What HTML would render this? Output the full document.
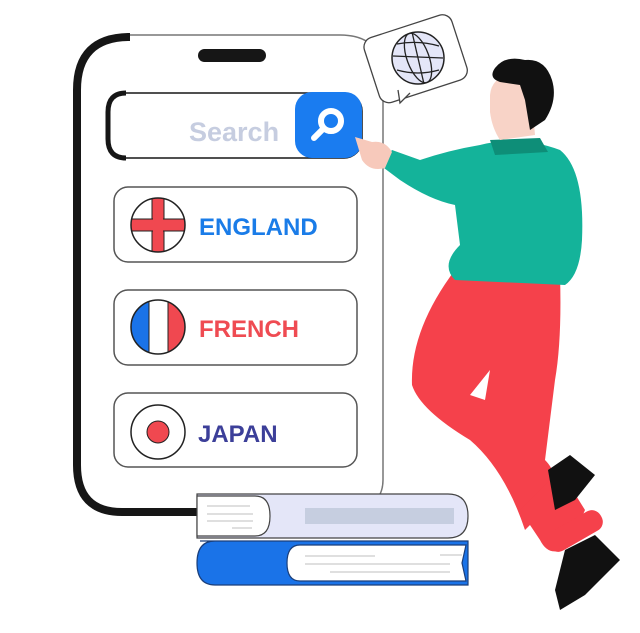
<!DOCTYPE html>
<html><head><meta charset="utf-8"><style>
html,body{margin:0;padding:0;background:#fff;}
svg{display:block;}
text{font-family:"Liberation Sans",sans-serif;font-weight:bold;}
</style></head><body>
<svg width="640" height="633" viewBox="0 0 640 633" xmlns="http://www.w3.org/2000/svg">
<!-- phone -->
<path d="M200 512 L122 512 Q75 512 75 465 L75 90 Q75 35 130 35 L340 35 Q383 35 383 78 L383 480 Q383 495 372 505" fill="#fff" stroke="#777" stroke-width="1.5"/>
<path d="M200 512 L122 512 Q77 512 77 465 L77 90 Q77 37 130 37" fill="none" stroke="#161616" stroke-width="8"/>
<rect x="198" y="49" width="68" height="13" rx="6.5" fill="#161616"/>
<!-- search bar -->
<rect x="108" y="93" width="254" height="65" rx="18" fill="#fff" stroke="#161616" stroke-width="1.5"/>
<path d="M126 93 Q108 93 108 112 L108 139 Q108 158 126 158" fill="none" stroke="#161616" stroke-width="5"/>
<text x="189" y="141" font-size="27" fill="#c6cde0" font-weight="bold">Search</text>
<rect x="295" y="92" width="67" height="66" rx="17" fill="#1a7cf0"/>
<circle cx="331" cy="121" r="10" fill="none" stroke="#fff" stroke-width="6"/>
<line x1="323" y1="129" x2="314" y2="138" stroke="#fff" stroke-width="6" stroke-linecap="round"/>
<!-- England -->
<rect x="114" y="187" width="243" height="75" rx="14" fill="#fff" stroke="#555" stroke-width="1.5"/>
<clipPath id="c1"><circle cx="158" cy="225" r="27"/></clipPath>
<circle cx="158" cy="225" r="27" fill="#fff"/>
<g clip-path="url(#c1)"><rect x="152" y="195" width="12" height="60" fill="#f04850" stroke="#222" stroke-width="1"/><rect x="128" y="219" width="60" height="12" fill="#f04850" stroke="#222" stroke-width="1"/><rect x="153" y="196" width="10" height="58" fill="#f04850"/></g>
<circle cx="158" cy="225" r="27" fill="none" stroke="#222" stroke-width="1.5"/>
<text x="199" y="235" font-size="24" fill="#1a7ce8">ENGLAND</text>
<!-- French -->
<rect x="114" y="290" width="243" height="75" rx="14" fill="#fff" stroke="#555" stroke-width="1.5"/>
<clipPath id="c2"><circle cx="158" cy="327" r="27"/></clipPath>
<g clip-path="url(#c2)"><rect x="130" y="298" width="19" height="58" fill="#1a73e8"/><rect x="149" y="298" width="19" height="58" fill="#fff"/><rect x="168" y="298" width="20" height="58" fill="#f04850"/><line x1="149" y1="298" x2="149" y2="356" stroke="#222"/><line x1="168" y1="298" x2="168" y2="356" stroke="#222"/></g>
<circle cx="158" cy="327" r="27" fill="none" stroke="#222" stroke-width="1.5"/>
<text x="199" y="337" font-size="24" fill="#ef4b52">FRENCH</text>
<!-- Japan -->
<rect x="114" y="393" width="243" height="74" rx="14" fill="#fff" stroke="#555" stroke-width="1.5"/>
<circle cx="158" cy="432" r="27" fill="#fff" stroke="#222" stroke-width="1.5"/>
<circle cx="158" cy="432" r="11" fill="#f04850" stroke="#222" stroke-width="1"/>
<text x="198" y="442" font-size="24" fill="#3c3f99">JAPAN</text>
<!-- books -->
<path d="M197 494 L448 494 Q468 494 468 516 Q468 538 448 538 L197 538 Z" fill="#e4e6f8" stroke="#444" stroke-width="1.2"/>
<path d="M197 496 L255 496 Q270 496 270 516 Q270 536 255 536 L197 536 Z" fill="#fff" stroke="#444" stroke-width="1.2"/>
<rect x="305" y="508" width="149" height="16" fill="#c6cee0"/>
<g stroke="#ccc" stroke-width="1.2"><line x1="207" y1="506" x2="250" y2="506"/><line x1="207" y1="514" x2="253" y2="514"/><line x1="207" y1="521" x2="253" y2="521"/><line x1="232" y1="528" x2="252" y2="528"/></g>
<path d="M200 541 L468 541 L468 585 L215 585 Q197 585 197 563 Q197 541 215 541 Z" fill="#1a73e8" stroke="#1b3f7a" stroke-width="1.2"/>
<path d="M300 545 L466 545 L462 563 L466 581 L300 581 Q287 581 287 563 Q287 545 300 545 Z" fill="#fff" stroke="#1b3f7a" stroke-width="1.2"/>
<g stroke="#ccc" stroke-width="1.2"><line x1="305" y1="556" x2="375" y2="556"/><line x1="305" y1="564" x2="450" y2="564"/><line x1="330" y1="572" x2="450" y2="572"/><line x1="440" y1="555" x2="462" y2="555"/></g>
<!-- speech bubble -->
<g transform="rotate(-18 415 60)">
<rect x="370" y="25" width="92" height="68" rx="10" fill="#fff" stroke="#444" stroke-width="1.3"/>
</g>
<path d="M398 90 L400 103 L410 93" fill="#fff" stroke="#444" stroke-width="1.3"/>
<circle cx="418" cy="58" r="26" fill="#e4e6f8" stroke="#222" stroke-width="1.5"/>
<g fill="none" stroke="#222" stroke-width="1.3"><ellipse cx="418" cy="58" rx="11" ry="26" transform="rotate(-20 418 58)"/><line x1="393" y1="56" x2="443" y2="58"/><path d="M397 44 Q418 40 439 46"/><path d="M397 70 Q418 76 439 70"/><line x1="412" y1="32" x2="424" y2="84"/></g>
<!-- person: pants -->
<path d="M455 270 L560 275 Q562 340 555 380 L545 460 Q560 475 548 490 L545 510 L525 530 Q505 470 470 440 Q420 410 412 385 Q410 330 455 270 Z" fill="#f5414b"/>
<path d="M470 395 L490 370 L485 400 Z" fill="#fff"/>
<path d="M520 510 L560 470 L585 510 L570 545 Q550 560 540 540 Z" fill="#f5414b"/>
<rect x="545" y="520" width="60" height="22" rx="10" transform="rotate(-30 575 531)" fill="#f5414b"/>
<path d="M548 470 L570 455 L595 475 L575 500 L555 510 Z" fill="#111"/>
<path d="M565 550 L595 535 L620 560 L585 595 L560 610 L555 590 Z" fill="#111"/>
<!-- shirt -->
<path d="M480 145 Q520 135 560 150 Q585 170 582 240 Q580 275 565 285 L455 280 Q440 265 460 245 L455 205 Q430 200 400 180 L380 165 L392 150 L420 160 Q450 150 480 145 Z" fill="#14b39a"/>
<path d="M490 140 L540 138 L548 152 L495 155 Z" fill="#0e8e78"/>
<!-- hand -->
<path d="M355 137 L372 142 Q385 140 392 152 L385 168 Q370 172 362 160 Z" fill="#f7c9bb"/>
<!-- head -->
<path d="M490 95 Q492 75 515 75 Q530 78 532 100 L535 135 L500 140 Q492 128 490 112 Z" fill="#f8d3c7"/>
<path d="M495 68 Q505 55 525 60 Q545 58 552 80 Q558 100 545 120 L530 130 L525 100 L520 85 L500 82 Q488 78 495 68 Z" fill="#111"/>
</svg>
</body></html>
